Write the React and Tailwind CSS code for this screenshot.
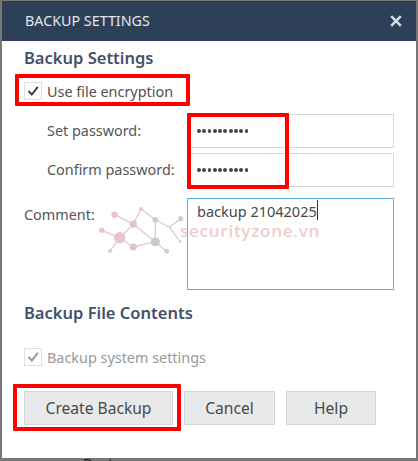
import React from 'react';

const nodes = [
  { x: 24.7, y: 24.7, r: 3.3, color: '#e6c6c8' },
  { x: 11.7, y: 40.3, r: 2.7, color: '#e6c6c8' },
  { x: 43.3, y: 34.3, r: 3.7, color: '#e0c5c7' },
  { x: 51, y: 19, r: 2, color: '#dccbcc' },
  { x: 65.3, y: 29.7, r: 2.8, color: '#d0c9ca' },
  { x: 90.7, y: 28.7, r: 2.6, color: '#cecece' },
  { x: 90, y: 51.7, r: 1.3, color: '#cecece' },
  { x: 65.3, y: 51.7, r: 4.5, color: '#d0c9ca' },
  { x: 76.7, y: 61.3, r: 2.4, color: '#cecece' },
  { x: 43.3, y: 57, r: 3.6, color: '#e0c5c7' },
  { x: 29.7, y: 47.7, r: 5.7, color: '#e6c6c8' },
  { x: 20, y: 61, r: 2, color: '#e6c6c8' }
];

const Watermark = () => (
  <div className="pointer-events-none absolute left-[90px] top-[190px]">
    <svg width="120" height="80" viewBox="0 0 120 80" fill="none">
      <defs>
        <linearGradient id="mesh" x1="10" y1="0" x2="92" y2="0" gradientUnits="userSpaceOnUse">
          <stop offset="0" stopColor="#ecc8ca" />
          <stop offset="0.55" stopColor="#dacccd" />
          <stop offset="1" stopColor="#d0d0d0" />
        </linearGradient>
      </defs>
      <path
        d="M24.7 24.7L43.3 34.3L51 19L65.3 29.7L79.7 37.3L90.7 28.7M79.7 37.3L90 51.7M65.3 29.7V51.7L76.7 61.3M43.3 34.3L65.3 51.7L43.3 57L29.7 47.7L43.3 34.3M11.7 40.3L29.7 47.7L20 61"
        stroke="url(#mesh)"
        strokeWidth="1.3"
      />
      {nodes.map((n) => (
        <circle key={`${n.x}-${n.y}`} cx={n.x} cy={n.y} r={n.r} fill={n.color} />
      ))}
    </svg>
    <span className="absolute left-[90px] top-[29px] whitespace-nowrap font-['Open_Sans','Noto_Sans',sans-serif] text-[17px] leading-6 font-semibold tracking-[0.75px] text-[#dfaaac]/60">
      securityzone.vn
    </span>
  </div>
);

const Checkbox = ({ label, disabled }) => (
  <div className={`flex h-[18px] items-center ${disabled ? 'text-[#999]' : 'text-[#505050]'}`}>
    <span className="flex h-[18px] w-[18px] items-center justify-center border border-[#dcdee2]">
      <svg width="12" height="12" viewBox="0 0 12 12" fill="none">
        <path d="M1.5 6L4.8 9.5L10.8 1.8" stroke={disabled ? '#8f98a6' : '#2e4057'} strokeWidth="1.9" />
      </svg>
    </span>
    <span className="ml-[5px] mt-px whitespace-nowrap">{label}</span>
  </div>
);

const PasswordRow = ({ label }) => (
  <div className="flex h-[34px] items-center">
    <span className="w-[140px] shrink-0 whitespace-nowrap">{label}</span>
    <div className="flex h-[34px] w-[207px] items-center gap-[1.5px] border border-[#d6d8dc] pl-[9px]">
      {Array.from({ length: 10 }, (_, i) => (
        <span key={i} className="h-[3.8px] w-[3.8px] rounded-full bg-[#444]" />
      ))}
    </div>
  </div>
);

const Button = ({ children, className }) => (
  <button className={`h-[34px] whitespace-nowrap border border-[#d3d5da] bg-[#e8e9eb] text-[15.6px] text-[#484848] ${className}`}>
    {children}
  </button>
);

const App = () => {
  return (
    <div className="relative h-[461px] w-[418px] overflow-hidden bg-[#777] pl-[2px] pt-px font-['Noto_Sans',sans-serif] text-[14.4px] leading-[18px] text-[#555]">
      <div className="h-[457px] w-[414px] bg-white">
        <div className="flex h-10 items-center justify-between bg-[#2e4057] pl-[23px] pr-[14px]">
          <span className="whitespace-nowrap text-[14.3px] text-[#e2e6eb]">BACKUP SETTINGS</span>
          <svg width="12" height="12" viewBox="0 0 12 12" fill="none">
            <path d="M1.2 1.2L10.8 10.8M10.8 1.2L1.2 10.8" stroke="#d5dce6" strokeWidth="2.5" />
          </svg>
        </div>

        <div className="pl-[22px]">
          <h2 className="h-[41px] whitespace-nowrap pt-[5px] text-[16.5px] leading-6 font-semibold text-[#43506a]">
            Backup Settings
          </h2>
          <Checkbox label="Use file encryption" />

          <div className="mt-[14px] flex flex-col gap-[5px] pl-[23px]">
            <PasswordRow label="Set password:" />
            <PasswordRow label="Confirm password:" />
          </div>

          <div className="mt-[11px] flex">
            <span className="w-[163px] shrink-0 pt-[8px]">Comment:</span>
            <div className="flex h-[92px] w-[207px] items-start border border-[#57b1e8] pl-[9px] pt-[3px] text-[14.5px] text-[#484848]">
              <span className="whitespace-nowrap">backup 21042025</span>
              <span className="-mt-[2px] h-5 w-px bg-[#333]" />
            </div>
          </div>

          <h2 className="mt-[11px] h-[47px] whitespace-nowrap text-[16.5px] leading-6 font-semibold text-[#43506a]">
            Backup File Contents
          </h2>
          <Checkbox label="Backup system settings" disabled />

          <div className="mt-[25px] flex gap-[11px]">
            <Button className="w-[149px]">Create Backup</Button>
            <Button className="w-[91px]">Cancel</Button>
            <Button className="w-[90px]">Help</Button>
          </div>
        </div>
      </div>

      {/* page behind the dialog */}
      <div className="absolute left-[83px] top-[458px] h-[3px] w-16 overflow-hidden text-[15px] leading-[18px] text-[#222]">
        <span className="block -mt-[4px]">Restore</span>
      </div>

      <Watermark />

      {/* highlighted steps */}
      <div className="absolute left-[15px] top-[74px] h-[32px] w-[175px] rounded-[1px] border-4 border-[#fd0000]" />
      <div className="absolute left-[187px] top-[113px] h-[76px] w-[102px] rounded-[1px] border-4 border-[#fd0000]" />
      <div className="absolute left-[13px] top-[384px] h-[47px] w-[168px] rounded-[1px] border-4 border-[#fd0000]" />
    </div>
  );
};

export default App;
